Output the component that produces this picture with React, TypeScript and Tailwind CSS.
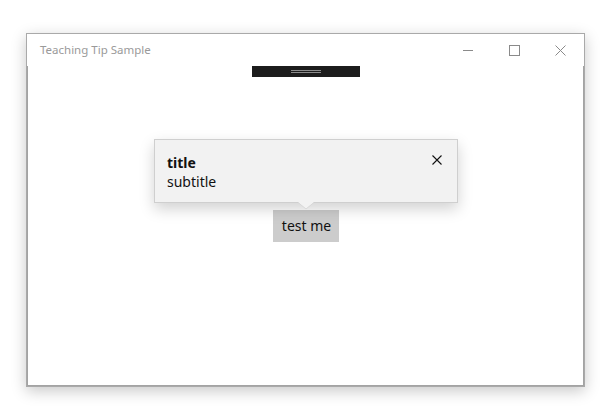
import React from "react";

export default function App() {
  return (
    <div
      className="w-[614px] h-[419px] bg-white pl-[26px] pt-[33px]"
      style={{ fontFamily: '"Noto Sans", "Open Sans", sans-serif' }}
    >
      <div className="w-[559px] h-[354px] border border-[#a9a9a9] bg-white flex flex-col shadow-[0_4px_14px_rgba(0,0,0,0.22)]">
        {/* title bar */}
        <div className="h-[32px] flex items-center shrink-0">
          <div className="pl-[13px] text-[11.5px] text-[#9a9a9a] flex-1 leading-none">Teaching Tip Sample</div>
          <div className="flex h-full pr-[1px]">
            <div className="w-[46px] h-full flex items-center justify-center">
              <svg width="10" height="10" viewBox="0 0 10 10">
                <line x1="0" y1="5.5" x2="10" y2="5.5" stroke="#8a8a8a" strokeWidth="1" />
              </svg>
            </div>
            <div className="w-[46px] h-full flex items-center justify-center">
              <svg width="11" height="11" viewBox="0 0 11 11">
                <rect x="0.5" y="0.5" width="10" height="10" fill="none" stroke="#8a8a8a" strokeWidth="1" />
              </svg>
            </div>
            <div className="w-[46px] h-full flex items-center justify-center">
              <svg width="11" height="11" viewBox="0 0 11 11">
                <path d="M0.5 0.5 L10.5 10.5 M10.5 0.5 L0.5 10.5" stroke="#8a8a8a" strokeWidth="1" />
              </svg>
            </div>
          </div>
        </div>
        {/* content */}
        <div className="relative flex-1 border-x border-b border-[#a3a3a3] flex flex-col items-center">
          <div className="w-[108px] h-[11px] bg-[#1c1c1c] flex flex-col items-center justify-center gap-[1px]">
            <div className="w-[30px] h-px bg-[#8a8a8a]" />
            <div className="w-[30px] h-px bg-[#8a8a8a]" />
          </div>
          <button className="mt-[133px] w-[66px] h-[32px] bg-[#cccccc] text-[14px] text-[#111] leading-none pl-[2px]">
            test me
          </button>

          {/* teaching tip */}
          <div className="absolute left-[126px] top-[73px] w-[304px] h-[64px] bg-[#f2f2f2] border border-[#cfcfcf] shadow-[0_6px_14px_rgba(0,0,0,0.18)]">
            <div className="pl-[12px] pt-[13px] text-[14px] leading-[19px] text-[#111]">
              <div className="font-bold">title</div>
              <div>subtitle</div>
            </div>
            <div className="absolute right-[15px] top-[15px]">
              <svg width="10" height="10" viewBox="0 0 10 10">
                <path d="M0.5 0.5 L9.5 9.5 M9.5 0.5 L0.5 9.5" stroke="#111" strokeWidth="1.1" />
              </svg>
            </div>
            <svg className="absolute left-[143px] top-[62px]" width="16" height="8" viewBox="0 0 16 8">
              <path d="M0 0 L8 7 L16 0 Z" fill="#f2f2f2" />
              <path d="M0 0.5 L8 7 L16 0.5" fill="none" stroke="#d8d8d8" strokeWidth="1" />
            </svg>
          </div>
        </div>
      </div>
    </div>
  );
}
